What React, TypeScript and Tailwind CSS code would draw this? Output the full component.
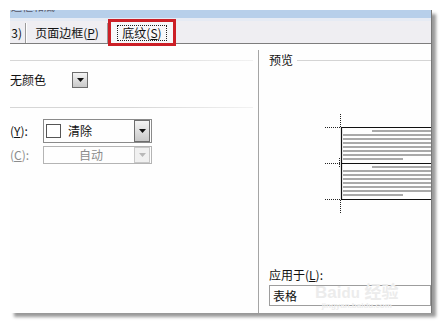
import React from "react";

const cjk = { fontFamily: '"Noto Sans CJK SC", "Liberation Sans", sans-serif' };

function Arrow({ disabled = false, h = "h-[16px]" }: { disabled?: boolean; h?: string }) {
  return (
    <div
      className={`w-[16px] ${h} flex items-center justify-center border ${
        disabled ? "border-[#c8c8c8] bg-[#f0f0f0]" : "border-[#6e6e6e] bg-gradient-to-b from-[#f4f4f4] to-[#c9c9c9]"
      }`}
    >
      <svg width="7" height="4" viewBox="0 0 7 4">
        <path d="M0 0h7L3.5 4z" fill={disabled ? "#b8b8b8" : "#111"} />
      </svg>
    </div>
  );
}

function Preview() {
  const cells = [61, 97];
  return (
    <svg width="172" height="202" viewBox="0 0 172 202" className="block">
      {cells.map((y) => (
        <g key={y}>
          <rect x="113" y={y + 3} width="60" height="2" fill="#a9a9a9" />
          {[7, 11, 15, 19, 23, 27].map((o) => (
            <rect key={o} x="84" y={y + o} width="90" height="2" fill="#a9a9a9" />
          ))}
          <rect x="84" y={y + 31} width="60" height="2" fill="#a9a9a9" />
        </g>
      ))}
      <path d="M82 61.5H172M82 97.5H172M82 133.5H172M82.5 61V134" stroke="#111" strokeWidth="1.2" fill="none" />
      <path
        d="M81.5 48V61M81.5 134V147M80.5 92V102M66 61.5H82M66 97.5H82M66 133.5H82"
        stroke="#222"
        strokeWidth="1"
        strokeDasharray="1 1"
        fill="none"
      />
    </svg>
  );
}

export default function App() {
  return (
    <div className="w-[443px] h-[324px] bg-white pt-[10px] pl-[10px] overflow-hidden" style={cjk}>
      <div className="relative w-[422px] h-[303px] flex flex-col bg-[#fefefe] border-r border-[#777] shadow-[4px_4px_3px_rgba(0,0,0,0.4)] text-[12px] leading-[12px] text-[#111]">
        {/* title strip */}
        <div className="h-[8px] bg-[#b7cfea] overflow-hidden">
          <div className="-mt-[9px] pl-[1px] text-[11px] leading-[11px] text-[#556]">边框和底</div>
        </div>

        {/* tabs */}
        <div className="h-[26px] flex items-end bg-[#efeef2] border-t-[3px] border-t-[#e6ebf4] border-b border-b-[#7d7d7d]">
          <div className="w-[16px] h-[20px] flex items-center justify-end pr-[3px] border-r border-[#9a9a9a] overflow-hidden">
            <span className="whitespace-nowrap">3)</span>
          </div>
          <div className="w-[82px] h-[20px] flex items-center justify-center border-l border-white border-r border-r-[#9a9a9a]">
            <span className="whitespace-nowrap">
              页面边框(<span className="underline">P</span>)
            </span>
          </div>
          <div className="relative w-[68px] h-[21px] flex items-center justify-center bg-[#f7f7f9]">
            <span className="border border-dotted border-[#222] px-[4px] py-[1px] whitespace-nowrap">
              底纹(<span className="underline">S</span>)
            </span>
            <div className="absolute -top-[3px] -bottom-[3px] inset-x-0 border-[3px] border-[#cc1f26]" />
          </div>
        </div>

        {/* body */}
        <div className="flex-1 flex">
          <div className="w-[249px] flex flex-col">
            <div className="mt-[16px] h-px w-[243px] bg-gradient-to-r from-[#d6d6d6] via-[#d6d6d6] to-[#f2f2f2]" />
            <div className="mt-[11px] h-[16px] flex items-center">
              <span className="w-[62px]">无颜色</span>
              <Arrow />
            </div>
            <div className="mt-[19px] h-px w-[243px] bg-gradient-to-r from-[#d6d6d6] via-[#d6d6d6] to-[#f2f2f2]" />

            <div className="mt-[11px] flex items-center">
              <span className="w-[33px]">
                (<span className="underline">Y</span>):
              </span>
              <div className="w-[109px] h-[24px] border border-[#8a8a8a] flex items-center pl-[2px] pr-px">
                <div className="w-[15px] h-[14px] border border-[#555] bg-white" />
                <span className="ml-[7px] flex-1">清除</span>
                <Arrow h="h-[22px]" />
              </div>
            </div>

            <div className="mt-[3px] flex items-center text-[#8c8c8c]">
              <span className="w-[33px]">
                (<span className="underline">C</span>):
              </span>
              <div className="w-[109px] h-[18px] border border-[#b4b4b4] flex items-center pr-px">
                <span className="flex-1 text-center pl-[4px]">自动</span>
                <Arrow disabled h="h-[16px]" />
              </div>
            </div>
          </div>

          <div className="relative flex-1 flex flex-col border-l border-[#a5a5a5] mt-[6px] pl-[10px]">
            <div className="mt-[4px] h-[12px] flex items-center">
              <span>预览</span>
              <div className="ml-[4px] flex-1 h-px bg-[#d4d4d4]" />
            </div>
            <div className="-ml-[10px]">
              <Preview />
            </div>
            <div className="mt-[1px]">
              应用于(<span className="underline">L</span>):
            </div>
            <div className="mt-[4px] h-[21px] border border-[#9d9d9d] flex items-center pl-[3px] bg-white">
              表格
            </div>

            {/* watermark */}
            <div className="absolute left-[56px] top-[234px] flex flex-col items-center text-[#ececec] pointer-events-none">
              <div className="text-[17px] leading-[17px] font-bold whitespace-nowrap" style={{ fontFamily: '"Liberation Sans", "Noto Sans CJK SC", sans-serif' }}>
                Bai<span className="text-[15px]">du</span> 经验
              </div>
              <div className="text-[8px] leading-[9px] font-bold" style={{ fontFamily: '"Liberation Sans", sans-serif' }}>
                jingyan.baidu.com
              </div>
            </div>
          </div>
        </div>
      </div>
    </div>
  );
}
